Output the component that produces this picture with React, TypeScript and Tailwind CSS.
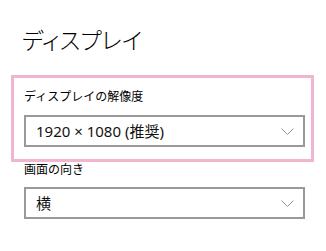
const font = "font-['Noto_Sans','Noto_Sans_CJK_JP',sans-serif]";

function Select({ value }: { value: string }) {
  return (
    <div className="flex items-center justify-between w-[281px] h-[32px] border-2 border-[#999999] bg-white pl-[10px] pr-[9px]">
      <span className="text-[15px] leading-none text-[#111]">{value}</span>
      <svg width="13" height="7" viewBox="0 0 13 7" fill="none">
        <path d="M0.5 0.5l6 6 6-6" stroke="#888888" strokeWidth="0.9" />
      </svg>
    </div>
  );
}

export default function App() {
  return (
    <div className={`w-[326px] h-[251px] bg-white overflow-hidden text-black ${font}`}>
      {/* Title */}
      <div className="h-[75px] pl-[22px] pt-[26px]">
        <h1 className="text-[23px] leading-[28px] font-light [font-feature-settings:'palt']">
          ディスプレイ
        </h1>
      </div>

      {/* Highlighted section */}
      <div className="ml-[11px] w-[303px] h-[87px] border-[3px] border-[#f2b5cf] pl-[10px] pt-[11px]">
        <div className="text-[12px] leading-[16px]">ディスプレイの解像度</div>
        <div className="mt-[10px]">
          <Select value="1920 × 1080 (推奨)" />
        </div>
      </div>

      {/* Orientation */}
      <div className="pl-[24px]">
        <div className="text-[12px] leading-[16px]">画面の向き</div>
        <div className="mt-[9px]">
          <Select value="横" />
        </div>
      </div>
    </div>
  );
}
